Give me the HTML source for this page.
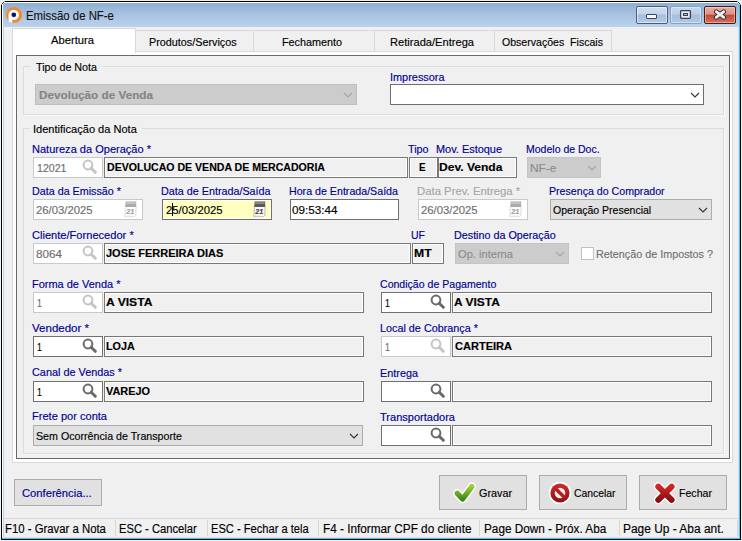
<!DOCTYPE html><html><head><meta charset="utf-8"><style>html,body{margin:0;padding:0}body{width:742px;height:541px;position:relative;overflow:hidden;background:#f0f0f0;font-family:"Liberation Sans",sans-serif}.t{position:absolute;white-space:pre;line-height:14px;transform-origin:0 0;-webkit-text-stroke:0.15px currentColor}</style></head><body><div style="position:absolute;left:1px;top:1px;width:738px;height:537px;border:1px solid #000;background:#f0f0f0;"></div>
<div style="position:absolute;left:3px;top:3px;width:736px;height:24px;background:linear-gradient(#8fb0d4,#a9c3e0 50%,#bad2ec);"></div>
<div style="position:absolute;left:2px;top:2px;width:737px;height:1px;background:#fff;"></div>
<div style="position:absolute;left:2px;top:3px;width:1px;height:535px;background:#fff;"></div>
<div style="position:absolute;left:3px;top:27px;width:1px;height:510px;background:#b9d1ea;"></div>
<div style="position:absolute;left:738px;top:27px;width:1px;height:511px;background:#d9dcf0;"></div>
<div style="position:absolute;left:739px;top:4px;width:1px;height:535px;background:#4cc6f2;"></div>
<div style="position:absolute;left:2px;top:537px;width:737px;height:1px;background:#d9dcf0;"></div>
<div style="position:absolute;left:2px;top:538px;width:738px;height:1px;background:#4cc6f2;"></div>
<div style="position:absolute;left:1px;top:1px;width:1px;height:1px;background:#f0f0f0;"></div>
<div style="position:absolute;left:2px;top:1px;width:1px;height:1px;background:#f0f0f0;"></div>
<div style="position:absolute;left:3px;top:1px;width:1px;height:1px;background:#f0f0f0;"></div>
<div style="position:absolute;left:1px;top:2px;width:1px;height:1px;background:#f0f0f0;"></div>
<div style="position:absolute;left:2px;top:2px;width:1px;height:1px;background:#f0f0f0;"></div>
<div style="position:absolute;left:1px;top:3px;width:1px;height:1px;background:#f0f0f0;"></div>
<div style="position:absolute;left:4px;top:1px;width:1px;height:1px;background:#8a8a8a;"></div>
<div style="position:absolute;left:3px;top:2px;width:1px;height:1px;background:#2a2a2a;"></div>
<div style="position:absolute;left:2px;top:3px;width:1px;height:1px;background:#2a2a2a;"></div>
<div style="position:absolute;left:1px;top:4px;width:1px;height:1px;background:#8a8a8a;"></div>
<div style="position:absolute;left:4px;top:2px;width:1px;height:1px;background:#ffffff;"></div>
<div style="position:absolute;left:3px;top:3px;width:1px;height:1px;background:#e8eef6;"></div>
<div style="position:absolute;left:2px;top:4px;width:1px;height:1px;background:#ffffff;"></div>
<div style="position:absolute;left:3px;top:4px;width:1px;height:1px;background:#9ab6d6;"></div>
<div style="position:absolute;left:4px;top:3px;width:1px;height:1px;background:#9ab6d6;"></div>
<div style="position:absolute;left:738px;top:1px;width:1px;height:1px;background:#f0f0f0;"></div>
<div style="position:absolute;left:739px;top:1px;width:1px;height:1px;background:#f0f0f0;"></div>
<div style="position:absolute;left:740px;top:1px;width:1px;height:1px;background:#f0f0f0;"></div>
<div style="position:absolute;left:739px;top:2px;width:1px;height:1px;background:#f0f0f0;"></div>
<div style="position:absolute;left:740px;top:2px;width:1px;height:1px;background:#f0f0f0;"></div>
<div style="position:absolute;left:740px;top:3px;width:1px;height:1px;background:#f0f0f0;"></div>
<div style="position:absolute;left:737px;top:1px;width:1px;height:1px;background:#8a8a8a;"></div>
<div style="position:absolute;left:738px;top:2px;width:1px;height:1px;background:#1f3a40;"></div>
<div style="position:absolute;left:739px;top:3px;width:1px;height:1px;background:#1f3a40;"></div>
<div style="position:absolute;left:740px;top:4px;width:1px;height:1px;background:#8a8a8a;"></div>
<div style="position:absolute;left:737px;top:2px;width:1px;height:1px;background:#ffffff;"></div>
<div style="position:absolute;left:738px;top:3px;width:1px;height:1px;background:#d8f4fa;"></div>
<div style="position:absolute;left:739px;top:4px;width:1px;height:1px;background:#8fdcf5;"></div>
<svg style="position:absolute;left:5px;top:6px" width="18" height="18" viewBox="0 0 18 18">
<circle cx="9" cy="9" r="8" fill="#f28a2e"/>
<circle cx="8.7" cy="8.9" r="5.2" fill="#fff"/>
<path d="M3.6 9 L3.6 15.6 L7.2 16.9 L7.2 10 Z" fill="#fff"/>
<circle cx="8.8" cy="8.8" r="2.4" fill="#10107a"/>
</svg>
<div style="position:absolute;left:636px;top:6px;width:30px;height:16px;border:1px solid #4d5d78;border-radius:2px;background:linear-gradient(#cfdef0 0%,#c0d4ea 45%,#a4bddb 50%,#b4cbe6 100%);box-shadow:inset 0 0 0 1px rgba(255,255,255,0.55)"></div>
<div style="position:absolute;left:646px;top:14px;width:9px;height:3px;border:1px solid #3a4660;border-radius:1px;background:#f8f8f8"></div>
<div style="position:absolute;left:670px;top:6px;width:30px;height:16px;border:1px solid #8aa2c0;border-radius:2px;background:linear-gradient(#c6d8ee 0%,#b9cfe8 45%,#a6bedc 50%,#b2c9e4 100%);box-shadow:inset 0 0 0 1px rgba(255,255,255,0.4)"></div>
<svg style="position:absolute;left:679px;top:9px" width="13" height="11"><rect x="1.6" y="1.6" width="9.8" height="7.8" rx="0.8" fill="#ececec" stroke="#3c4255" stroke-width="1.3"/><rect x="4.5" y="4.5" width="4" height="2" fill="#9fb8d8" stroke="#3c4255" stroke-width="1"/></svg>
<div style="position:absolute;left:704px;top:6px;width:30px;height:16px;border:1px solid #4a1818;border-radius:2px;background:linear-gradient(#eab0a0 0%,#dc9282 45%,#c04a2e 50%,#cf7460 100%);box-shadow:inset 0 0 0 1px rgba(255,220,210,0.5)"></div>
<svg style="position:absolute;left:713px;top:9px" width="14" height="11"><path d="M3.2 2.6 L10.8 8.4 M10.8 2.6 L3.2 8.4" stroke="#3b3046" stroke-width="4.6" stroke-linecap="round"/><path d="M3.2 2.6 L10.8 8.4 M10.8 2.6 L3.2 8.4" stroke="#f2f2f2" stroke-width="2.6" stroke-linecap="round"/></svg>

<div style="position:absolute;left:12px;top:51px;width:719px;height:410px;border:1px solid #d9d9d9;background:#fff;"></div>
<div style="position:absolute;left:135px;top:30px;width:117px;height:21px;border:1px solid #d9d9d9;background:#f0f0f0;box-sizing:border-box;width:119px;height:22px"></div>
<div style="position:absolute;left:253px;top:30px;width:120px;height:21px;border:1px solid #d9d9d9;background:#f0f0f0;box-sizing:border-box;width:122px;height:22px"></div>
<div style="position:absolute;left:374px;top:30px;width:119px;height:21px;border:1px solid #d9d9d9;background:#f0f0f0;box-sizing:border-box;width:121px;height:22px"></div>
<div style="position:absolute;left:494px;top:30px;width:116px;height:21px;border:1px solid #d9d9d9;background:#f0f0f0;box-sizing:border-box;width:118px;height:22px"></div>
<div style="position:absolute;left:12px;top:28px;width:122px;height:24px;border:1px solid #d9d9d9;border-bottom:none;background:#fff;"></div>
<div style="position:absolute;left:16px;top:55px;width:712px;height:402px;border:1px solid #6a6a6a;background:#f0f0f0;"></div>
<div style="position:absolute;left:23px;top:66px;width:699px;height:47px;border:1px solid #dcdcdc;box-shadow:1px 1px 0 #fafafa;"></div>
<div style="position:absolute;left:30px;top:65px;width:73px;height:3px;background:#f0f0f0;"></div>
<div style="position:absolute;left:23px;top:128px;width:699px;height:324px;border:1px solid #dcdcdc;box-shadow:1px 1px 0 #fafafa;"></div>
<div style="position:absolute;left:30px;top:127px;width:112px;height:3px;background:#f0f0f0;"></div>
<div style="position:absolute;left:35px;top:84px;width:320px;height:19px;border:1px solid #bfbfbf;background:#cccccc;"></div>
<svg style="position:absolute;left:343.0px;top:91.8px" width="10" height="6.0"><polyline points="1,1 5.0,5.0 9,1" fill="none" stroke="#a3a3a3" stroke-width="1.1"/></svg>
<div style="position:absolute;left:390px;top:84px;width:312px;height:19px;border:1px solid #6f6f6f;background:#fff;"></div>
<svg style="position:absolute;left:690.0px;top:91.8px" width="10" height="6.0"><polyline points="1,1 5.0,5.0 9,1" fill="none" stroke="#333" stroke-width="1.1"/></svg>
<div style="position:absolute;left:33px;top:157px;width:68px;height:19px;border:1px solid #c9c9c9;background:#fff;"></div>
<svg style="position:absolute;left:82px;top:159px" width="16" height="15"><circle cx="6" cy="6" r="4.4" fill="none" stroke="#c4c4c4" stroke-width="2"/><line x1="9.2" y1="9.2" x2="13.3" y2="13.3" stroke="#c4c4c4" stroke-width="3" stroke-linecap="round"/></svg>
<div style="position:absolute;left:104px;top:157px;width:302px;height:19px;border:1px solid #777;background:#f0f0f0;box-shadow:inset 0 0 0 1px #fff;"></div>
<div style="position:absolute;left:409px;top:157px;width:27px;height:19px;border:1px solid #777;background:#f0f0f0;box-shadow:inset 0 0 0 1px #fff;"></div>
<div style="position:absolute;left:438px;top:157px;width:77px;height:19px;border:1px solid #777;background:#f0f0f0;box-shadow:inset 0 0 0 1px #fff;"></div>
<div style="position:absolute;left:527px;top:157px;width:72px;height:19px;border:1px solid #c4c4c4;background:#cccccc;"></div>
<svg style="position:absolute;left:587.0px;top:164.6px" width="10" height="6.0"><polyline points="1,1 5.0,5.0 9,1" fill="none" stroke="#a3a3a3" stroke-width="1.1"/></svg>
<div style="position:absolute;left:33px;top:199px;width:108px;height:19px;border:1px solid #c9c9c9;background:#fff;"></div>
<svg style="position:absolute;left:123px;top:201px;opacity:0.5" width="15" height="17" viewBox="0 0 15 17">
<path d="M2.4 5.5 L13.2 5.5 L12.8 14.2 L11.6 15.6 L1.6 15.6 L1.9 14.4 Z" fill="#fbfbfb" stroke="#b4b4b4" stroke-width="0.9"/>
<path d="M1.8 14.6 L11.4 14.9 L11.6 15.8 L1.4 15.8 Z" fill="#cfcfcf"/>
<path d="M2.6 0.6 L13.2 0.6 L13.2 6 L2.3 6 Z" fill="#5a5a5a"/>
<path d="M3.2 1.2 L12.6 1.2 L12.6 3 L3.1 3 Z" fill="#8e8e8e"/>
<text x="3.2" y="13.2" font-family="Liberation Sans" font-size="7.2" font-weight="bold" font-style="italic" fill="#4a4a4a" stroke="#4a4a4a" stroke-width="0.2">21</text>
</svg>
<div style="position:absolute;left:162px;top:199px;width:108px;height:19px;border:1px solid #707070;background:#ffffc0;box-shadow:inset 0 0 0 1px #fff;"></div>
<div style="position:absolute;left:172px;top:203px;width:1px;height:13px;background:#000;"></div>
<svg style="position:absolute;left:252px;top:201px;opacity:1" width="15" height="17" viewBox="0 0 15 17">
<path d="M2.4 5.5 L13.2 5.5 L12.8 14.2 L11.6 15.6 L1.6 15.6 L1.9 14.4 Z" fill="#fbfbfb" stroke="#b4b4b4" stroke-width="0.9"/>
<path d="M1.8 14.6 L11.4 14.9 L11.6 15.8 L1.4 15.8 Z" fill="#cfcfcf"/>
<path d="M2.6 0.6 L13.2 0.6 L13.2 6 L2.3 6 Z" fill="#5a5a5a"/>
<path d="M3.2 1.2 L12.6 1.2 L12.6 3 L3.1 3 Z" fill="#8e8e8e"/>
<text x="3.2" y="13.2" font-family="Liberation Sans" font-size="7.2" font-weight="bold" font-style="italic" fill="#4a4a4a" stroke="#4a4a4a" stroke-width="0.2">21</text>
</svg>
<div style="position:absolute;left:290px;top:199px;width:107px;height:19px;border:1px solid #707070;background:#fff;"></div>
<div style="position:absolute;left:418px;top:199px;width:108px;height:19px;border:1px solid #c9c9c9;background:#fff;"></div>
<svg style="position:absolute;left:508px;top:201px;opacity:0.5" width="15" height="17" viewBox="0 0 15 17">
<path d="M2.4 5.5 L13.2 5.5 L12.8 14.2 L11.6 15.6 L1.6 15.6 L1.9 14.4 Z" fill="#fbfbfb" stroke="#b4b4b4" stroke-width="0.9"/>
<path d="M1.8 14.6 L11.4 14.9 L11.6 15.8 L1.4 15.8 Z" fill="#cfcfcf"/>
<path d="M2.6 0.6 L13.2 0.6 L13.2 6 L2.3 6 Z" fill="#5a5a5a"/>
<path d="M3.2 1.2 L12.6 1.2 L12.6 3 L3.1 3 Z" fill="#8e8e8e"/>
<text x="3.2" y="13.2" font-family="Liberation Sans" font-size="7.2" font-weight="bold" font-style="italic" fill="#4a4a4a" stroke="#4a4a4a" stroke-width="0.2">21</text>
</svg>
<div style="position:absolute;left:550px;top:199px;width:160px;height:19px;border:1px solid #adadad;background:#e1e1e1;"></div>
<svg style="position:absolute;left:698.0px;top:207.0px" width="10" height="6.0"><polyline points="1,1 5.0,5.0 9,1" fill="none" stroke="#333" stroke-width="1.1"/></svg>
<div style="position:absolute;left:33px;top:243px;width:68px;height:19px;border:1px solid #c9c9c9;background:#fff;"></div>
<svg style="position:absolute;left:82px;top:245px" width="16" height="15"><circle cx="6" cy="6" r="4.4" fill="none" stroke="#c4c4c4" stroke-width="2"/><line x1="9.2" y1="9.2" x2="13.3" y2="13.3" stroke="#c4c4c4" stroke-width="3" stroke-linecap="round"/></svg>
<div style="position:absolute;left:104px;top:243px;width:305px;height:19px;border:1px solid #777;background:#f0f0f0;box-shadow:inset 0 0 0 1px #fff;"></div>
<div style="position:absolute;left:412px;top:243px;width:30px;height:19px;border:1px solid #777;background:#f0f0f0;box-shadow:inset 0 0 0 1px #fff;"></div>
<div style="position:absolute;left:455px;top:243px;width:112px;height:19px;border:1px solid #c4c4c4;background:#cccccc;"></div>
<svg style="position:absolute;left:555.0px;top:251.0px" width="10" height="6.0"><polyline points="1,1 5.0,5.0 9,1" fill="none" stroke="#a3a3a3" stroke-width="1.1"/></svg>
<div style="position:absolute;left:581px;top:247px;width:11px;height:11px;border:1px solid #c2c2c2;background:#fff;"></div>
<div style="position:absolute;left:33px;top:292px;width:68px;height:19px;border:1px solid #c9c9c9;background:#fff;"></div>
<svg style="position:absolute;left:82px;top:294px" width="16" height="15"><circle cx="6" cy="6" r="4.4" fill="none" stroke="#c4c4c4" stroke-width="2"/><line x1="9.2" y1="9.2" x2="13.3" y2="13.3" stroke="#c4c4c4" stroke-width="3" stroke-linecap="round"/></svg>
<div style="position:absolute;left:104px;top:292px;width:258px;height:19px;border:1px solid #777;background:#f0f0f0;box-shadow:inset 0 0 0 1px #fff;"></div>
<div style="position:absolute;left:381px;top:292px;width:68px;height:19px;border:1px solid #707070;background:#fff;"></div>
<svg style="position:absolute;left:430px;top:294px" width="16" height="15"><circle cx="6" cy="6" r="4.4" fill="none" stroke="#6a6a6a" stroke-width="2"/><line x1="9.2" y1="9.2" x2="13.3" y2="13.3" stroke="#6a6a6a" stroke-width="3" stroke-linecap="round"/></svg>
<div style="position:absolute;left:452px;top:292px;width:258px;height:19px;border:1px solid #777;background:#f0f0f0;box-shadow:inset 0 0 0 1px #fff;"></div>
<div style="position:absolute;left:33px;top:336px;width:68px;height:19px;border:1px solid #707070;background:#fff;"></div>
<svg style="position:absolute;left:82px;top:338px" width="16" height="15"><circle cx="6" cy="6" r="4.4" fill="none" stroke="#6a6a6a" stroke-width="2"/><line x1="9.2" y1="9.2" x2="13.3" y2="13.3" stroke="#6a6a6a" stroke-width="3" stroke-linecap="round"/></svg>
<div style="position:absolute;left:104px;top:336px;width:258px;height:19px;border:1px solid #777;background:#f0f0f0;box-shadow:inset 0 0 0 1px #fff;"></div>
<div style="position:absolute;left:381px;top:336px;width:68px;height:19px;border:1px solid #c9c9c9;background:#fff;"></div>
<svg style="position:absolute;left:430px;top:338px" width="16" height="15"><circle cx="6" cy="6" r="4.4" fill="none" stroke="#c4c4c4" stroke-width="2"/><line x1="9.2" y1="9.2" x2="13.3" y2="13.3" stroke="#c4c4c4" stroke-width="3" stroke-linecap="round"/></svg>
<div style="position:absolute;left:452px;top:336px;width:258px;height:19px;border:1px solid #777;background:#f0f0f0;box-shadow:inset 0 0 0 1px #fff;"></div>
<div style="position:absolute;left:33px;top:381px;width:68px;height:19px;border:1px solid #707070;background:#fff;"></div>
<svg style="position:absolute;left:82px;top:383px" width="16" height="15"><circle cx="6" cy="6" r="4.4" fill="none" stroke="#6a6a6a" stroke-width="2"/><line x1="9.2" y1="9.2" x2="13.3" y2="13.3" stroke="#6a6a6a" stroke-width="3" stroke-linecap="round"/></svg>
<div style="position:absolute;left:104px;top:381px;width:258px;height:19px;border:1px solid #777;background:#f0f0f0;box-shadow:inset 0 0 0 1px #fff;"></div>
<div style="position:absolute;left:381px;top:381px;width:68px;height:19px;border:1px solid #707070;background:#fff;"></div>
<svg style="position:absolute;left:430px;top:383px" width="16" height="15"><circle cx="6" cy="6" r="4.4" fill="none" stroke="#6a6a6a" stroke-width="2"/><line x1="9.2" y1="9.2" x2="13.3" y2="13.3" stroke="#6a6a6a" stroke-width="3" stroke-linecap="round"/></svg>
<div style="position:absolute;left:452px;top:381px;width:258px;height:19px;border:1px solid #777;background:#f0f0f0;box-shadow:inset 0 0 0 1px #fff;"></div>
<div style="position:absolute;left:33px;top:425px;width:328px;height:19px;border:1px solid #adadad;background:#e1e1e1;"></div>
<svg style="position:absolute;left:349.0px;top:433.0px" width="10" height="6.0"><polyline points="1,1 5.0,5.0 9,1" fill="none" stroke="#333" stroke-width="1.1"/></svg>
<div style="position:absolute;left:381px;top:425px;width:68px;height:19px;border:1px solid #707070;background:#fff;"></div>
<svg style="position:absolute;left:430px;top:427px" width="16" height="15"><circle cx="6" cy="6" r="4.4" fill="none" stroke="#6a6a6a" stroke-width="2"/><line x1="9.2" y1="9.2" x2="13.3" y2="13.3" stroke="#6a6a6a" stroke-width="3" stroke-linecap="round"/></svg>
<div style="position:absolute;left:452px;top:425px;width:258px;height:19px;border:1px solid #777;background:#f0f0f0;box-shadow:inset 0 0 0 1px #fff;"></div>
<div style="position:absolute;left:14px;top:479px;width:86px;height:25px;border:1px solid #adadad;background:#e1e1e1;"></div>
<div style="position:absolute;left:439px;top:475px;width:86px;height:33px;border:1px solid #adadad;background:#e1e1e1;"></div>
<div style="position:absolute;left:539px;top:475px;width:86px;height:33px;border:1px solid #adadad;background:#e1e1e1;"></div>
<div style="position:absolute;left:639px;top:475px;width:86px;height:33px;border:1px solid #adadad;background:#e1e1e1;"></div>
<svg style="position:absolute;left:452px;top:481px" width="26" height="24" viewBox="0 0 26 24">
<defs><linearGradient id="gg" x1="0" y1="0" x2="0" y2="1"><stop offset="0" stop-color="#9ccc3c"/><stop offset="1" stop-color="#3f8a16"/></linearGradient></defs>
<path d="M5.3 12.3 L10.6 18 L19.8 5.6" fill="none" stroke="#fff" stroke-width="8.2" stroke-linecap="round" stroke-linejoin="round"/>
<path d="M5.3 12.3 L10.6 18 L19.8 5.6" fill="none" stroke="url(#gg)" stroke-width="5.4" stroke-linecap="round" stroke-linejoin="round"/>
</svg>
<svg style="position:absolute;left:548px;top:481px" width="24" height="24" viewBox="0 0 24 24">
<defs><linearGradient id="rg" x1="0" y1="0" x2="0" y2="1"><stop offset="0" stop-color="#d42a2a"/><stop offset="1" stop-color="#8a1212"/></linearGradient></defs>
<circle cx="12" cy="12" r="11.2" fill="#fff"/>
<circle cx="12" cy="12" r="9.6" fill="url(#rg)"/>
<circle cx="12" cy="12" r="5.3" fill="#f2f2f2"/>
<path d="M7.5 7.5 L16.5 16.5" stroke="#b82020" stroke-width="3.6"/>
</svg>
<svg style="position:absolute;left:652px;top:481px" width="26" height="24" viewBox="0 0 26 24">
<defs><linearGradient id="xg" x1="0" y1="0" x2="0" y2="1"><stop offset="0" stop-color="#d42424"/><stop offset="1" stop-color="#8a1010"/></linearGradient></defs>
<path d="M6.3 5.6 L19.6 18.8 M19.6 5.6 L6.3 18.8" stroke="#fff" stroke-width="8.8" stroke-linecap="round"/>
<path d="M6.3 5.6 L19.6 18.8 M19.6 5.6 L6.3 18.8" stroke="url(#xg)" stroke-width="6" stroke-linecap="round"/>
</svg>
<div style="position:absolute;left:4px;top:518px;width:734px;height:1px;background:#d7d7d7;"></div>
<div style="position:absolute;left:4px;top:519px;width:734px;height:18px;background:#f0f0f0;"></div>
<div style="position:absolute;left:115px;top:520px;width:1px;height:16px;background:#d7d7d7;"></div>
<div style="position:absolute;left:207px;top:520px;width:1px;height:16px;background:#d7d7d7;"></div>
<div style="position:absolute;left:318px;top:520px;width:1px;height:16px;background:#d7d7d7;"></div>
<div style="position:absolute;left:479px;top:520px;width:1px;height:16px;background:#d7d7d7;"></div>
<div style="position:absolute;left:619px;top:520px;width:1px;height:16px;background:#d7d7d7;"></div>
<div style="position:absolute;left:737px;top:520px;width:1px;height:16px;background:#d7d7d7;"></div>
<div class="t" id="t0" style="left:26.0px;top:9px;font-size:12px;font-weight:normal;color:#141414;transform:scaleX(0.9487)">Emissão de NF-e</div>
<div class="t" id="t1" style="left:148.5px;top:35px;font-size:11px;font-weight:normal;color:#000000;transform:scaleX(0.9811)">Produtos/Serviços</div>
<div class="t" id="t2" style="left:282.0px;top:35px;font-size:11px;font-weight:normal;color:#000000;transform:scaleX(0.9808)">Fechamento</div>
<div class="t" id="t3" style="left:390.3px;top:35px;font-size:11px;font-weight:normal;color:#000000;transform:scaleX(1.0101)">Retirada/Entrega</div>
<div class="t" id="t4" style="left:502.4px;top:35px;font-size:11px;font-weight:normal;color:#000000;transform:scaleX(0.9601)">Observações  Fiscais</div>
<div class="t" id="t5" style="left:51.0px;top:33px;font-size:11px;font-weight:normal;color:#000000;transform:scaleX(1.0193)">Abertura</div>
<div class="t" id="t6" style="left:36.0px;top:60px;font-size:11px;font-weight:normal;color:#000000;transform:scaleX(0.9744)">Tipo de Nota</div>
<div class="t" id="t7" style="left:33.0px;top:122px;font-size:11px;font-weight:normal;color:#000000;transform:scaleX(1.0043)">Identificação da Nota</div>
<div class="t" id="t8" style="left:39.0px;top:88px;font-size:11.5px;font-weight:bold;color:#858585;transform:scaleX(1.0193)">Devolução de Venda</div>
<div class="t" id="t9" style="left:389.8px;top:70px;font-size:11px;font-weight:normal;color:#000092;transform:scaleX(0.9920)">Impressora</div>
<div class="t" id="t10" style="left:31.8px;top:142px;font-size:11px;font-weight:normal;color:#000092;transform:scaleX(1.0031)">Natureza da Operação *</div>
<div class="t" id="t11" style="left:408.0px;top:142px;font-size:11px;font-weight:normal;color:#000092;transform:scaleX(0.9800)">Tipo</div>
<div class="t" id="t12" style="left:436.0px;top:142px;font-size:11px;font-weight:normal;color:#000092;transform:scaleX(0.9931)">Mov. Estoque</div>
<div class="t" id="t13" style="left:526.0px;top:142px;font-size:11px;font-weight:normal;color:#000092;transform:scaleX(0.9560)">Modelo de Doc.</div>
<div class="t" id="t14" style="left:37.0px;top:161px;font-size:11px;font-weight:normal;color:#6d6d6d;transform:scaleX(0.9630)">12021</div>
<div class="t" id="t15" style="left:106.5px;top:160px;font-size:11px;font-weight:bold;color:#000;transform:scaleX(0.9604)">DEVOLUCAO DE VENDA DE MERCADORIA</div>
<div class="t" id="t16" style="left:419.2px;top:160px;font-size:11px;font-weight:bold;color:#000;transform:scaleX(0.8985)">E</div>
<div class="t" id="t17" style="left:439.4px;top:160px;font-size:11px;font-weight:bold;color:#000;transform:scaleX(1.0951)">Dev. Venda</div>
<div class="t" id="t18" style="left:530.3px;top:161px;font-size:11.5px;font-weight:normal;color:#8c8c8c;transform:scaleX(1.0300)">NF-e</div>
<div class="t" id="t19" style="left:31.8px;top:184px;font-size:11px;font-weight:normal;color:#000092;transform:scaleX(0.9766)">Data da Emissão *</div>
<div class="t" id="t20" style="left:160.9px;top:184px;font-size:11px;font-weight:normal;color:#000092;transform:scaleX(0.9791)">Data de Entrada/Saída</div>
<div class="t" id="t21" style="left:288.6px;top:184px;font-size:11px;font-weight:normal;color:#000092;transform:scaleX(0.9683)">Hora de Entrada/Saída</div>
<div class="t" id="t22" style="left:416.6px;top:184px;font-size:11px;font-weight:normal;color:#a6a6a6;transform:scaleX(1.0315)">Data Prev. Entrega *</div>
<div class="t" id="t23" style="left:548.6px;top:184px;font-size:11px;font-weight:normal;color:#000092;transform:scaleX(0.9651)">Presença do Comprador</div>
<div class="t" id="t24" style="left:35.8px;top:203px;font-size:11.5px;font-weight:normal;color:#6d6d6d;transform:scaleX(0.9830)">26/03/2025</div>
<div class="t" id="t25" style="left:166.0px;top:203px;font-size:11.5px;font-weight:normal;color:#000;transform:scaleX(0.9830)">25/03/2025</div>
<div class="t" id="t26" style="left:291.8px;top:203px;font-size:11px;font-weight:normal;color:#000;transform:scaleX(1.0639)">09:53:44</div>
<div class="t" id="t27" style="left:421.2px;top:203px;font-size:11.5px;font-weight:normal;color:#6d6d6d;transform:scaleX(0.9830)">26/03/2025</div>
<div class="t" id="t28" style="left:552.8px;top:203px;font-size:11.5px;font-weight:normal;color:#000;transform:scaleX(0.9144)">Operação Presencial</div>
<div class="t" id="t29" style="left:31.8px;top:228px;font-size:11px;font-weight:normal;color:#000092;transform:scaleX(1.0081)">Cliente/Fornecedor *</div>
<div class="t" id="t30" style="left:410.6px;top:228px;font-size:11px;font-weight:normal;color:#000092;transform:scaleX(0.9509)">UF</div>
<div class="t" id="t31" style="left:453.5px;top:228px;font-size:11px;font-weight:normal;color:#000092;transform:scaleX(0.9781)">Destino da Operação</div>
<div class="t" id="t32" style="left:35.8px;top:247px;font-size:11px;font-weight:normal;color:#6d6d6d;transform:scaleX(1.0603)">8064</div>
<div class="t" id="t33" style="left:105.5px;top:246px;font-size:11px;font-weight:bold;color:#000;transform:scaleX(0.9977)">JOSE FERREIRA DIAS</div>
<div class="t" id="t34" style="left:414.4px;top:246px;font-size:11px;font-weight:bold;color:#000;transform:scaleX(1.1081)">MT</div>
<div class="t" id="t35" style="left:458.2px;top:247px;font-size:11.5px;font-weight:normal;color:#8c8c8c;transform:scaleX(0.9659)">Op. interna</div>
<div class="t" id="t36" style="left:595.5px;top:247px;font-size:11.5px;font-weight:normal;color:#707070;transform:scaleX(0.9380)">Retenção de Impostos ?</div>
<div class="t" id="t37" style="left:31.6px;top:277px;font-size:11px;font-weight:normal;color:#000092;transform:scaleX(0.9980)">Forma de Venda *</div>
<div class="t" id="t38" style="left:379.7px;top:277px;font-size:11px;font-weight:normal;color:#000092;transform:scaleX(0.9601)">Condição de Pagamento</div>
<div class="t" id="t39" style="left:36.5px;top:296px;font-size:11px;font-weight:normal;color:#6d6d6d;transform:scaleX(0.8000)">1</div>
<div class="t" id="t40" style="left:105.8px;top:295px;font-size:11px;font-weight:bold;color:#000;transform:scaleX(1.1003)">A VISTA</div>
<div class="t" id="t41" style="left:385.4px;top:296px;font-size:11px;font-weight:normal;color:#000;transform:scaleX(0.8000)">1</div>
<div class="t" id="t42" style="left:454.0px;top:295px;font-size:11px;font-weight:bold;color:#000;transform:scaleX(1.0857)">A VISTA</div>
<div class="t" id="t43" style="left:31.6px;top:321px;font-size:11px;font-weight:normal;color:#000092;transform:scaleX(1.0480)">Vendedor *</div>
<div class="t" id="t44" style="left:379.7px;top:321px;font-size:11px;font-weight:normal;color:#000092;transform:scaleX(0.9829)">Local de Cobrança *</div>
<div class="t" id="t45" style="left:37.0px;top:340px;font-size:11px;font-weight:normal;color:#000;transform:scaleX(0.8000)">1</div>
<div class="t" id="t46" style="left:105.8px;top:339px;font-size:11px;font-weight:bold;color:#000;transform:scaleX(0.9773)">LOJA</div>
<div class="t" id="t47" style="left:385.4px;top:340px;font-size:11px;font-weight:normal;color:#6d6d6d;transform:scaleX(0.8000)">1</div>
<div class="t" id="t48" style="left:454.5px;top:339px;font-size:11px;font-weight:bold;color:#000;transform:scaleX(1.0028)">CARTEIRA</div>
<div class="t" id="t49" style="left:31.6px;top:365px;font-size:11px;font-weight:normal;color:#000092;transform:scaleX(0.9873)">Canal de Vendas *</div>
<div class="t" id="t50" style="left:379.7px;top:366px;font-size:11px;font-weight:normal;color:#000092;transform:scaleX(0.9858)">Entrega</div>
<div class="t" id="t51" style="left:37.0px;top:385px;font-size:11px;font-weight:normal;color:#000;transform:scaleX(0.8000)">1</div>
<div class="t" id="t52" style="left:105.8px;top:384px;font-size:11px;font-weight:bold;color:#000;transform:scaleX(0.9903)">VAREJO</div>
<div class="t" id="t53" style="left:31.8px;top:409px;font-size:11px;font-weight:normal;color:#000092;transform:scaleX(1.0055)">Frete por conta</div>
<div class="t" id="t54" style="left:379.7px;top:410px;font-size:11px;font-weight:normal;color:#000092;transform:scaleX(1.0025)">Transportadora</div>
<div class="t" id="t55" style="left:35.8px;top:429px;font-size:11.5px;font-weight:normal;color:#000;transform:scaleX(0.9280)">Sem Ocorrência de Transporte</div>
<div class="t" id="t56" style="left:21.8px;top:486px;font-size:11px;font-weight:normal;color:#000092;transform:scaleX(1.0180)">Conferência...</div>
<div class="t" id="t57" style="left:478.8px;top:486px;font-size:11px;font-weight:normal;color:#000;transform:scaleX(0.9808)">Gravar</div>
<div class="t" id="t58" style="left:574.0px;top:486px;font-size:11px;font-weight:normal;color:#000;transform:scaleX(0.9435)">Cancelar</div>
<div class="t" id="t59" style="left:678.5px;top:486px;font-size:11px;font-weight:normal;color:#000;transform:scaleX(0.9624)">Fechar</div>
<div class="t" id="t60" style="left:5.4px;top:522px;font-size:12px;font-weight:normal;color:#000;transform:scaleX(0.9459)">F10 - Gravar a Nota</div>
<div class="t" id="t61" style="left:119.2px;top:522px;font-size:12px;font-weight:normal;color:#000;transform:scaleX(0.9323)">ESC - Cancelar</div>
<div class="t" id="t62" style="left:211.2px;top:522px;font-size:12px;font-weight:normal;color:#000;transform:scaleX(0.9265)">ESC - Fechar a tela</div>
<div class="t" id="t63" style="left:323.3px;top:522px;font-size:12px;font-weight:normal;color:#000;transform:scaleX(0.9808)">F4 - Informar CPF do cliente</div>
<div class="t" id="t64" style="left:483.6px;top:522px;font-size:12px;font-weight:normal;color:#000;transform:scaleX(0.9803)">Page Down - Próx. Aba</div>
<div class="t" id="t65" style="left:623.0px;top:522px;font-size:12px;font-weight:normal;color:#000;transform:scaleX(0.9940)">Page Up - Aba ant.</div></body></html>
